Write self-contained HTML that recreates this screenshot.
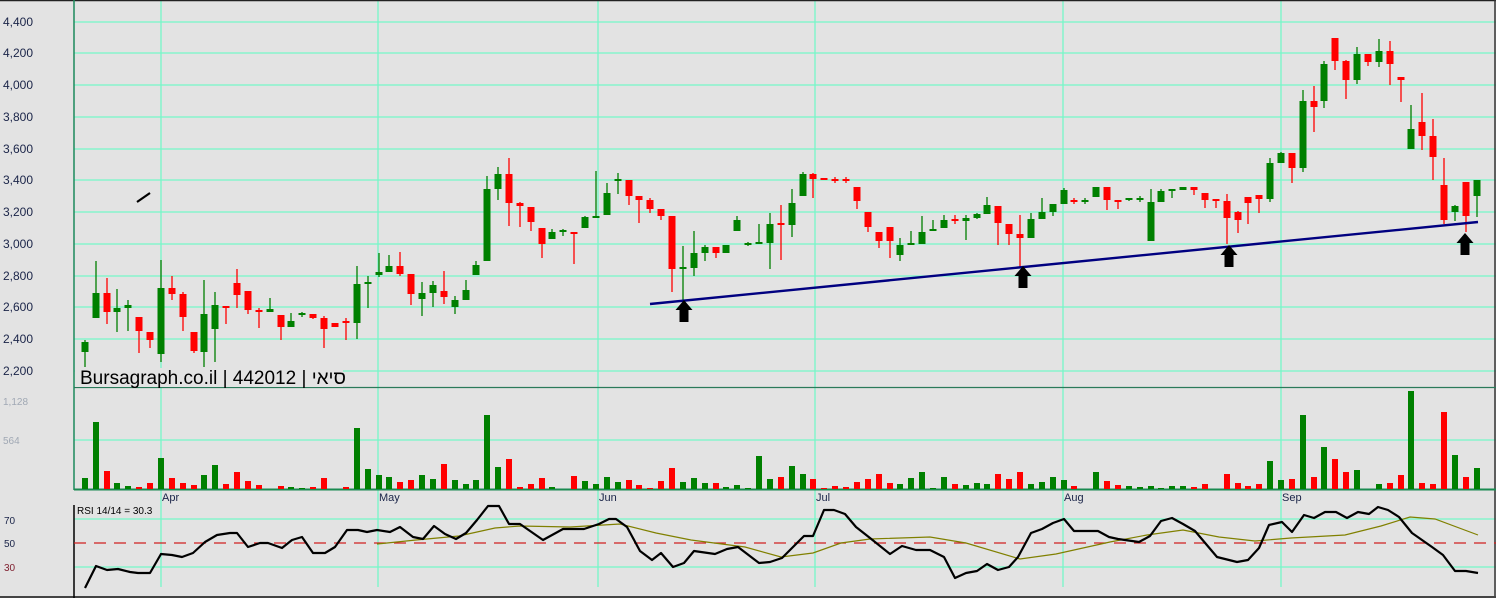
<!DOCTYPE html>
<html><head><meta charset="utf-8"><style>
html,body{margin:0;padding:0;background:#e3e3e3;width:1496px;height:598px;overflow:hidden}
svg{display:block}
text{font-family:"Liberation Sans","Noto Sans CJK JP",sans-serif}
</style></head><body>
<svg id="s" width="1496" height="598" xmlns="http://www.w3.org/2000/svg">
<rect width="1496" height="598" fill="#e3e3e3"/>
<g id="grid" stroke="#76f7c8" stroke-width="1.3"></g>
<g id="lbl" font-size="12" fill="#1a2448"></g>
<line x1="0" y1="0.5" x2="1496" y2="0.5" stroke="#222" stroke-width="1.5"/>
<line x1="1495" y1="0" x2="1495" y2="598" stroke="#333" stroke-width="1.5"/>
<line x1="0" y1="597" x2="1496" y2="597" stroke="#444" stroke-width="2"/>
<line x1="74" y1="0" x2="74" y2="490" stroke="#1d8a5c" stroke-width="1.5"/>
<line x1="74" y1="505" x2="74" y2="598" stroke="#000" stroke-width="1.5"/>
<line x1="74" y1="387.5" x2="1496" y2="387.5" stroke="#2a7a5a" stroke-width="1.3"/>
<line x1="74" y1="489.5" x2="1496" y2="489.5" stroke="#1a8a50" stroke-width="2"/>
<line x1="74" y1="543" x2="1496" y2="543" stroke="#d02020" stroke-width="1.2" stroke-dasharray="12,8"/>
<g id="c"></g>
<g id="v"></g>
<line x1="137" y1="202" x2="150" y2="193" stroke="#000" stroke-width="2.2"/>
<polyline points="650,304 1478,222" fill="none" stroke="#000080" stroke-width="2.4"/>
<g id="arr" fill="#000"></g>
<rect x="75" y="368" width="268" height="19" fill="#e3e3e3"/>
<text x="80" y="384" font-size="19" fill="#000">Bursagraph.co.il | 442012 | סיאי</text>
<polyline id="ma" fill="none" stroke="#808000" stroke-width="1.2"/>
<polyline id="rsi" fill="none" stroke="#000" stroke-width="2.2" stroke-linejoin="round"/>
<text x="77" y="514" font-size="10" fill="#000">RSI 14/14 = 30.3</text>
</svg>
<script>
var NS="http://www.w3.org/2000/svg";
function el(p,t,a,txt){var e=document.createElementNS(NS,t);for(var k in a)e.setAttribute(k,a[k]);if(txt)e.textContent=txt;document.getElementById(p).appendChild(e);}
var py=[22,53,85,117,149,180,212,244,276,307,339,371],pl=["4,400","4,200","4,000","3,800","3,600","3,400","3,200","3,000","2,800","2,600","2,400","2,200"];
py.forEach(function(y,i){el("grid","line",{x1:74,y1:y,x2:1496,y2:y});el("lbl","text",{x:3,y:y+4},pl[i]);});
[440,519,567].forEach(function(y){el("grid","line",{x1:74,y1:y,x2:1496,y2:y});});
[161,378,598,815,1063,1281].forEach(function(x){el("grid","line",{x1:x,y1:0,x2:x,y2:587});});
el("lbl","text",{x:3,y:405,fill:"#a0a8b4","font-size":"10"},"1,128");
el("lbl","text",{x:3,y:444,fill:"#a0a8b4","font-size":"10"},"564");
el("lbl","text",{x:4,y:524,"font-size":"10"},"70");
el("lbl","text",{x:4,y:547,"font-size":"10"},"50");
el("lbl","text",{x:4,y:571,"font-size":"10",fill:"#802030"},"30");
[["Apr",162],["May",379],["Jun",599],["Jul",816],["Aug",1064],["Sep",1282]].forEach(function(d){el("lbl","text",{x:d[1],y:501,"font-size":"11"},d[0]);});
var C=[
[85,1,340,367,342,352,478],[96,1,261,318,293,318,422],[107,0,278,324,293,312,471],[117,1,289,332,308,312,483],[128,1,300,331,305,308,486],
[139,0,317,353,317,331,487],[150,0,332,348,332,340,483],[161,1,260,362,288,354,458],[172,0,276,300,288,294,478],[183,0,292,331,294,317,483],
[194,0,332,353,332,351,485],[204,1,280,367,314,352,475],[215,1,292,362,305,329,465],[226,0,307,324,306,308,484],[237,0,269,308,283,295,472],
[248,0,291,314,291,310,481],[259,0,308,328,310,312,485],[270,1,298,312,309,312,490],[281,0,315,340,315,327,486],[291,1,313,327,321,327,487],
[302,1,312,317,313,315,488],[313,0,314,319,314,318,487],[324,0,316,348,318,329,478],[335,0,323,327,323,327,490],[346,0,318,340,321,323,487],
[357,1,266,339,284,323,428],[368,1,276,308,282,284,469],[379,1,253,277,272,275,475],[389,1,255,272,266,272,477],[400,0,252,276,266,274,482],
[411,0,274,305,274,294,480],[422,1,282,316,293,299,475],[433,1,281,307,285,293,479],[444,0,271,304,291,297,464],[455,1,296,314,300,307,480],
[466,1,280,300,290,300,484],[476,1,261,275,265,275,480],[487,1,176,261,189,261,415],[498,1,167,200,174,189,467],[509,0,158,226,174,203,459],
[520,0,202,227,203,206,487],[531,0,207,231,207,222,484],[542,0,228,258,228,244,478],[552,1,229,239,232,239,487],[563,1,229,236,230,232,490],
[574,0,232,264,232,234,476],[585,1,216,228,217,228,481],[596,1,171,217,216,218,484],[607,1,183,215,193,215,477],[618,1,173,194,179,181,482],
[629,0,180,205,180,196,480],[639,0,196,223,196,200,485],[650,0,198,213,200,209,488],[661,0,209,220,209,216,481],[672,0,216,292,216,269,468],
[683,1,246,300,267,269,482],[694,1,231,276,253,268,478],[705,1,245,261,247,253,483],[716,0,247,258,247,253,483],[726,1,245,253,245,253,487],
[737,1,216,231,220,231,485],[748,1,242,246,243,245,488],[759,1,224,243,242,244,456],[770,1,213,269,224,243,479],[781,0,205,260,223,225,477],
[792,1,189,237,203,225,466],[803,1,172,196,174,196,474],[813,0,173,198,174,179,479],[824,0,178,180,178,180,488],[835,0,177,183,179,181,486],
[846,0,177,183,179,181,487],[857,0,187,209,187,201,482],[868,0,212,232,212,227,479],[879,0,232,248,232,241,474],[890,0,227,258,227,241,483],
[900,1,238,261,245,255,484],[911,1,231,244,243,245,478],[922,1,216,244,232,244,472],[933,1,220,231,229,231,488],[944,1,215,228,220,228,477],
[955,0,215,224,219,221,484],[966,1,215,240,218,221,485],[977,1,213,219,214,218,483],[987,1,197,214,205,214,484],[998,0,206,245,206,223,474],
[1009,0,224,245,224,234,479],[1020,0,215,267,234,238,472],[1031,1,213,238,219,238,484],[1042,1,198,219,212,219,482],[1053,1,204,216,204,212,477],
[1064,1,188,204,190,204,480],[1074,0,198,204,200,202,486],[1085,1,198,204,200,202,490],[1096,1,187,197,187,197,472],[1107,0,187,210,187,200,481],
[1118,0,200,209,200,202,485],[1129,1,198,201,198,200,486],[1140,1,196,202,198,200,487],[1151,1,189,241,202,241,486],[1161,1,189,202,191,202,488],
[1172,1,189,198,189,191,486],[1183,1,187,190,187,190,486],[1194,0,187,195,187,190,487],[1205,0,193,208,193,200,484],[1216,0,199,208,199,201,490],
[1227,0,194,244,201,218,474],[1238,0,211,233,212,220,483],[1248,0,197,224,197,203,486],[1259,0,195,213,195,199,484],[1270,1,158,202,163,199,461],
[1281,1,152,163,153,163,480],[1292,0,153,183,153,168,479],[1303,1,90,172,101,168,415],[1314,0,86,132,101,107,477],[1324,1,61,108,64,101,447],
[1335,0,38,70,38,61,459],[1346,0,60,99,61,80,472],[1357,1,47,84,54,80,470],[1368,0,54,66,54,62,490],[1379,1,39,67,51,62,484],
[1390,0,41,85,51,64,483],[1401,0,77,102,77,80,475],[1411,1,105,149,129,149,391],[1422,0,93,150,122,136,483],[1433,0,119,180,136,157,484],
[1444,0,158,224,185,220,412],[1455,1,205,221,206,212,455],[1466,0,182,232,182,216,477],[1477,1,180,217,180,196,468]];
C.forEach(function(c){var col=c[1]?"#008000":"#ff0000";
el("c","line",{x1:c[0],y1:c[2],x2:c[0],y2:c[3],stroke:col,"stroke-width":1.3});
var h=Math.max(c[5]-c[4],2);el("c","rect",{x:c[0]-3.5,y:c[4],width:7,height:h,fill:col});
if(c[6]<489)el("v","rect",{x:c[0]-3,y:c[6],width:6,height:489-c[6],fill:col});});
[[684,300],[1023,266],[1229,245],[1465,233]].forEach(function(a){var x=a[0],y=a[1];
el("arr","polygon",{points:(x)+","+y+" "+(x+8.5)+","+(y+10)+" "+(x+4.5)+","+(y+10)+" "+(x+4.5)+","+(y+22)+" "+(x-4.5)+","+(y+22)+" "+(x-4.5)+","+(y+10)+" "+(x-8.5)+","+(y+10)});});
document.getElementById("rsi").setAttribute("points","85,588 96,566 107,570 118,569 130,572 138,573 150,573 161,554 172,555 182,557 193,553 205,542 217,535 230,533 237,533 248,547 260,543 268,543 282,548 292,540 302,537 313,553 325,553 335,547 347,530 358,530 367,532 377,530 390,532 400,527 413,537 423,539 434,526 445,534 456,539 466,533 477,520 488,506 499,506 509,524 520,524 543,540 563,529 584,529 599,524 609,519 616,519 627,527 640,551 652,560 661,553 673,567 684,563 694,551 715,554 727,549 738,547 759,563 770,562 782,558 804,536 813,536 824,510 834,510 845,514 856,527 870,538 890,554 902,546 916,550 930,550 944,557 955,578 966,573 977,571 987,564 998,570 1009,567 1018,557 1031,533 1042,529 1053,523 1064,519 1074,531 1098,531 1109,537 1118,539 1139,542 1150,536 1161,521 1172,518 1183,524 1195,531 1206,544 1217,557 1237,562 1248,560 1259,548 1269,525 1282,522 1292,532 1304,515 1314,518 1325,512 1336,512 1347,518 1358,512 1369,514 1378,507 1388,510 1399,517 1412,533 1432,547 1443,555 1455,571 1466,571 1478,573");
document.getElementById("ma").setAttribute("points","377,544 416,540 459,536 495,528 520,526 570,527 620,524 656,533 691,540 745,547 781,557 813,553 841,543 870,539 930,537 966,543 1020,559 1056,554 1110,542 1147,535 1183,530 1219,537 1255,541 1291,538 1345,535 1381,526 1410,517 1435,519 1478,535");
</script>
</body></html>
